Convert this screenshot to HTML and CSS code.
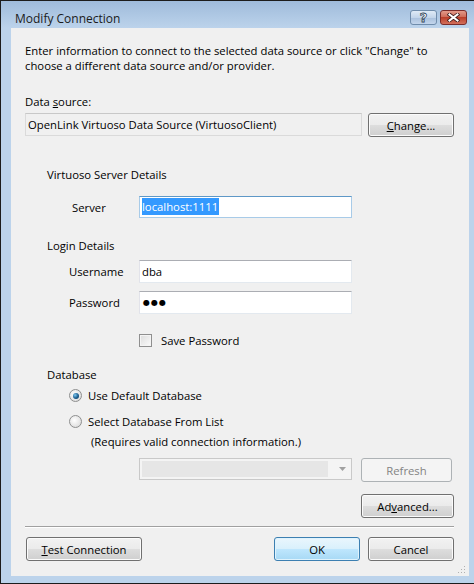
FILE: index.html
```html
<!DOCTYPE html>
<html lang="en">
<head>
  <meta charset="UTF-8" />
  <title>Modify Connection</title>
  <link rel="stylesheet" href="styles.css">
</head>
<body>
  <div class="window">
    <div class="titlebar">
      <span class="title">Modify Connection</span>
      <div class="caption-btns">
        <span class="cap help">?</span>
        <span class="cap close">
          <svg width="13" height="9" viewBox="0 0 13 9">
            <path d="M2.5 1.5 L10.5 7.5 M10.5 1.5 L2.5 7.5" stroke="#3b1a1a" stroke-width="3.6" stroke-linecap="square" fill="none"/>
            <path d="M2.5 1.5 L10.5 7.5 M10.5 1.5 L2.5 7.5" stroke="#ffffff" stroke-width="2.1" stroke-linecap="square" fill="none"/>
          </svg>
        </span>
      </div>
    </div>

    <div class="client">
      <p class="intro">Enter information to connect to the selected data source or click "Change" to<br>choose a different data source and/or provider.</p>

      <div class="ds-label">Data <u>s</u>ource:</div>
      <div class="ds-row">
        <div class="readonly">OpenLink Virtuoso Data Source (VirtuosoClient)</div>
        <button class="btn change"><u>C</u>hange...</button>
      </div>

      <div class="group-title first">Virtuoso Server Details</div>
      <div class="field server">
        <label class="server-label">Server</label>
        <div class="input focused"><span class="sel">localhost:1111</span></div>
      </div>

      <div class="group-title login">Login Details</div>
      <div class="field user">
        <label>Username</label>
        <div class="input">dba</div>
      </div>
      <div class="field pass">
        <label>Password</label>
        <div class="input dots">●●●</div>
      </div>

      <div class="check-row">
        <span class="checkbox"></span>
        <span>Save Password</span>
      </div>

      <div class="group-title db">Database</div>
      <div class="radio-row one">
        <span class="radio checked"></span>
        <span>Use Default Database</span>
      </div>
      <div class="radio-row two">
        <span class="radio"></span>
        <span>Select Database From List</span>
      </div>
      <div class="hint">(Requires valid connection information.)</div>

      <div class="combo-row">
        <div class="combo">
          <span class="combo-face"></span>
          <svg class="arrow" width="7" height="4" viewBox="0 0 7 4"><path d="M0 0 H7 L3.5 4 Z" fill="#a0a0a0"/></svg>
        </div>
        <button class="btn disabled">Refresh</button>
      </div>

      <div class="adv-row">
        <button class="btn adv">Ad<u>v</u>anced...</button>
      </div>

      <div class="separator"></div>

      <div class="footer">
        <button class="btn test"><u>T</u>est Connection</button>
        <div class="footer-right">
          <button class="btn ok">OK</button>
          <button class="btn cancel">Cancel</button>
        </div>
      </div>

      <svg class="grip" width="8" height="8" viewBox="0 0 8 8">
        <rect x="6" y="0" width="1" height="1" fill="#b0b0b0"/>
        <rect x="3" y="3" width="1" height="1" fill="#b0b0b0"/>
        <rect x="6" y="3" width="1" height="1" fill="#b0b0b0"/>
        <rect x="0" y="6" width="1" height="1" fill="#b0b0b0"/>
        <rect x="3" y="6" width="1" height="1" fill="#b0b0b0"/>
        <rect x="6" y="6" width="1" height="1" fill="#b0b0b0"/>
      </svg>
    </div>
  </div>
</body>
</html>
```

FILE: styles.css
```css
body {
  margin: 0;
  font-family: "Open Sans", "Noto Sans", sans-serif;
  font-size: 11.3px;
  color: #000;
}
.window {
  width: 474px;
  height: 584px;
  box-sizing: border-box;
  border-top: 1px solid #1c1c1c;
  border-left: 1px solid #1c1c1c;
  border-bottom: 1px solid #1c1c1c;
  background: #bcd3eb;
  padding: 0 5px 7px 10px;
  display: flex;
  flex-direction: column;
}
.titlebar {
  height: 27px;
  margin: 0 -5px 0 -10px;
  padding: 0 7px 0 14px;
  background: linear-gradient(#9fbbdb, #bcd3eb);
  display: flex;
  justify-content: space-between;
  align-items: flex-start;
}
.title {
  font-size: 12px;
  line-height: 16px;
  margin-top: 10px;
  color: #1b1b1b;
}
.caption-btns {
  display: flex;
  gap: 3px;
  margin-top: 9px;
}
.cap {
  width: 27px;
  height: 15px;
  border-radius: 3px;
  display: flex;
  align-items: center;
  justify-content: center;
  box-sizing: border-box;
}
.help {
  border: 1px solid #6f8cab;
  background: linear-gradient(#dfeaf6, #c3d5ea 50%, #a9c0dc 51%, #c3d6ec);
  font-family: "DejaVu Sans", sans-serif;
  font-weight: bold;
  font-size: 13px;
  line-height: 13px;
  color: #fff;
  -webkit-text-stroke: 0.8px #2e3f55;
}
.close {
  border: 1px solid #7a2c2a;
  background: linear-gradient(#e39a8a, #cf6d5a 45%, #bb3f2a 50%, #d2705c);
}
.client {
  flex: 1;
  background: #f0f0f0;
  padding: 15px 15px 0 14px;
  position: relative;
  line-height: 15px;
}
.intro {
  margin: 0;
}
.ds-label {
  margin-top: 21px;
}
.ds-row {
  margin-top: 4px;
  display: flex;
  align-items: flex-start;
  justify-content: space-between;
}
.readonly {
  width: 337px;
  height: 23px;
  box-sizing: border-box;
  border: 1px solid #dadada;
  border-top-color: #c8c8c8;
  background: #f0f0f0;
  padding: 3px 2px;
}
.btn {
  font-family: inherit;
  font-size: 11.3px;
  color: #000;
  height: 24px;
  padding: 0;
  border: 1px solid #707070;
  border-radius: 3px;
  background: linear-gradient(#f2f2f2, #ebebeb 48%, #dddddd 52%, #cfcfcf);
  box-shadow: inset 0 0 0 1px #fbfbfb;
}
.change {
  width: 86px;
}
.group-title {
  padding-left: 22px;
}
.group-title.first {
  margin-top: 30px;
}
.field {
  display: flex;
  align-items: center;
  padding-left: 44px;
}
.field label {
  width: 70px;
}
.field .server-label {
  padding-left: 3px;
  width: 67px;
}
.input {
  width: 213px;
  height: 23px;
  box-sizing: border-box;
  border: 1px solid #e3e9ef;
  border-top-color: #abadb3;
  border-left-color: #e2e3ea;
  background: #fff;
  padding: 3px 2px;
}
.input.focused {
  border-color: #a8cbe8;
  border-top-color: #5e98c7;
  height: 22px;
  padding: 2px 2px;
}
.sel {
  background: #3399ff;
  color: #fff;
  padding: 1px 1px 1px 0;
}
.dots {
  font-family: "DejaVu Sans", sans-serif;
  font-size: 8px;
  letter-spacing: 1px;
  padding-left: 3px;
}
.server {
  margin-top: 14px;
}
.group-title.login {
  margin-top: 20px;
}
.user {
  margin-top: 7px;
}
.pass {
  margin-top: 8px;
}
.check-row {
  margin-top: 19px;
  padding-left: 114px;
  display: flex;
  align-items: center;
  gap: 9px;
}
.checkbox {
  width: 13px;
  height: 13px;
  box-sizing: border-box;
  border: 1px solid #8f8f8f;
  background: linear-gradient(135deg, #dcdcdc, #fbfbfb);
  box-shadow: inset 0 0 0 1px #f4f4f4;
}
.group-title.db {
  margin-top: 19px;
}
.radio-row {
  display: flex;
  align-items: center;
  gap: 6px;
  padding-left: 44px;
}
.radio-row.one {
  margin-top: 6px;
}
.radio-row.two {
  margin-top: 11px;
}
.radio {
  width: 13px;
  height: 13px;
  box-sizing: border-box;
  border-radius: 50%;
  border: 1px solid #8e8f8f;
  background: radial-gradient(circle at 40% 40%, #ffffff, #d4d4d4);
  display: flex;
  align-items: center;
  justify-content: center;
}
.radio.checked::after {
  content: "";
  width: 6px;
  height: 6px;
  border-radius: 50%;
  background: radial-gradient(circle at 35% 35%, #7fc8f0, #1a5d8e 55%, #0d3a5c);
}
.hint {
  margin-top: 5px;
  padding-left: 66px;
}
.combo-row {
  margin-top: 9px;
  padding-left: 114px;
  display: flex;
  align-items: flex-start;
  gap: 9px;
}
.combo {
  width: 213px;
  height: 22px;
  box-sizing: border-box;
  border: 1px solid #c9c9c9;
  background: #f4f4f4;
  display: flex;
  align-items: center;
  padding: 2px 5px 2px 2px;
  gap: 11px;
}
.combo-face {
  flex: 1;
  height: 16px;
  background: #e6e6e6;
}
.disabled {
  width: 91px;
  color: #838383;
  border-color: #adb2b5;
  background: #f4f4f4;
  box-shadow: none;
}
.adv-row {
  margin-top: 12px;
  display: flex;
  justify-content: flex-end;
}
.adv {
  width: 93px;
}
.separator {
  margin-top: 8px;
  border-top: 1px solid #a0a0a0;
  border-bottom: 1px solid #fff;
}
.footer {
  margin-top: 9px;
  display: flex;
  justify-content: space-between;
  padding-left: 1px;
}
.footer-right {
  display: flex;
  gap: 8px;
}
.test {
  width: 116px;
}
.ok,
.cancel {
  width: 86px;
}
.ok {
  border-color: #3c7fb1;
  background: linear-gradient(#eaf6fd, #d9f0fc 48%, #bee6fd 52%, #a7d9f5);
  box-shadow: inset 0 0 0 1px #dff3fd;
}
.grip {
  position: absolute;
  right: 3px;
  bottom: 2px;
}
```
